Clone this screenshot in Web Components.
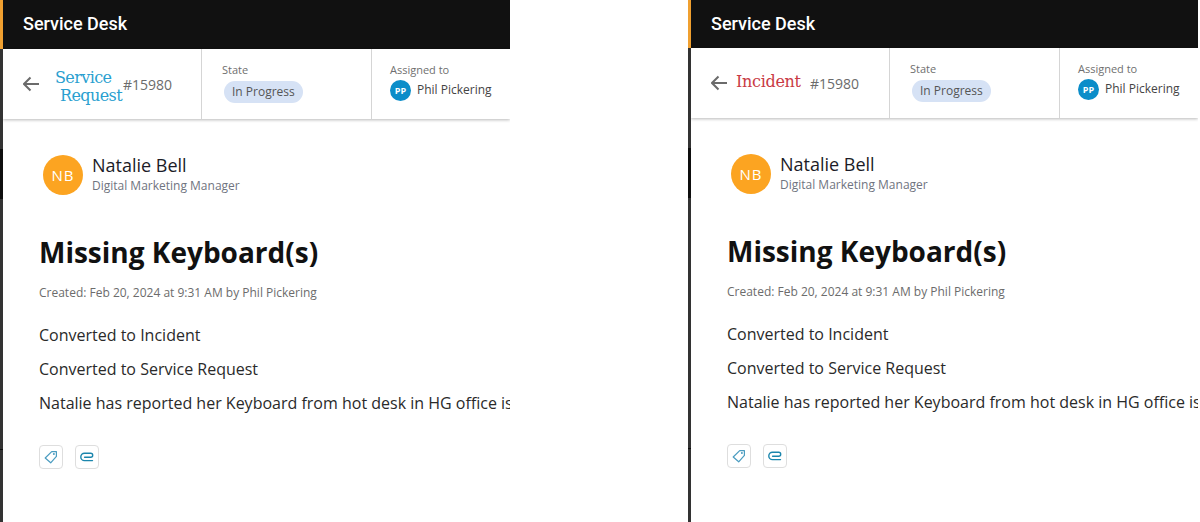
<!DOCTYPE html>
<html>
<head>
<meta charset="utf-8">
<title>Service Desk</title>
<style>
    html, body { margin: 0; height: 100%; background: white; overflow: hidden; }
    body { display: flex; height: 522px; font-family: "Open Sans", sans-serif; }
</style>
</head>
<body>
<ticket-pane offset="0" type="Service|Request" color="#2a9fd0" style="--pane-width: 510px; --after: 178px;"></ticket-pane>
<ticket-pane offset="1" type="Incident" color="#c93a44" style="--pane-width: 510px; --after: 0px;"></ticket-pane>

<script>
class AppBar extends HTMLElement {
    constructor() {
        super();
        this.attachShadow({ mode: 'open' });
        this.shadowRoot.innerHTML = `
            <style>
                :host { display: flex; align-items: center; box-sizing: border-box; background: #111; color: white;
                    padding: 0 0 2px 20px; font: 500 18px Roboto, sans-serif; flex: none; }
            </style>
            <slot></slot>
        `;
    }
}

class TicketField extends HTMLElement {
    constructor() {
        super();
        this.attachShadow({ mode: 'open' });
        this.shadowRoot.innerHTML = `
            <style>
                :host { display: flex; flex-direction: column; flex: none; padding: 13px 0 0 18px;
                    border-left: 1px solid #d5d5d5; font-family: "Open Sans", sans-serif; }
                .label { font-size: 11px; line-height: 15px; color: #6f6f6f; }
            </style>
            <div class="label">${this.getAttribute('label')}</div>
            <slot></slot>
        `;
    }
}

class StatePill extends HTMLElement {
    constructor() {
        super();
        this.attachShadow({ mode: 'open' });
        this.shadowRoot.innerHTML = `
            <style>
                :host { display: inline-block; align-self: flex-start; margin: 4px 0 0 2px; padding: 0 8px; height: 22px; line-height: 21px;
                    border-radius: 11px; background: #d6e2f5; color: #555; font-size: 12px; }
            </style>
            <slot></slot>
        `;
    }
}

class UserChip extends HTMLElement {
    constructor() {
        super();
        this.attachShadow({ mode: 'open' });
        this.shadowRoot.innerHTML = `
            <style>
                :host { display: flex; align-items: center; gap: 6px; color: #444; font-size: 12px; margin-top: 3px; }
                .dot { width: 21px; height: 21px; border-radius: 50%; background: #0b8dc9; color: white;
                    font-size: 9px; font-weight: 700; display: flex; align-items: center; justify-content: center; }
                span { position: relative; top: -1px; }
            </style>
            <div class="dot">${this.getAttribute('initials')}</div>
            <span><slot></slot></span>
        `;
    }
}

class IconButton extends HTMLElement {
    constructor() {
        super();
        this.attachShadow({ mode: 'open' });
        this.shadowRoot.innerHTML = `
            <style>
                :host { display: flex; align-items: center; justify-content: center; width: 22px; height: 22px;
                    border: 1px solid #dedede; border-radius: 4px; background: white; }
            </style>
            <slot></slot>
        `;
    }
}

class TicketPane extends HTMLElement {
    constructor() {
        super();
        this.attachShadow({ mode: 'open' });
        const lines = this.getAttribute('type').split('|');
        const color = this.getAttribute('color');
        const drop = Number(this.getAttribute('offset'));
        const wrapped = lines.length > 1;
        const typeText = wrapped
            ? `<span class="l1">${lines[0]}</span><span class="l2">${lines[1]}</span>`
            : lines[0];
        this.shadowRoot.innerHTML = `
            <style>
                :host { display: flex; flex: none; width: calc(var(--pane-width) + var(--after)); height: 522px;
                    font-family: "Open Sans", sans-serif; color: #222; overflow: hidden; }
                .rail { width: 3px; flex: none; display: flex; flex-direction: column; }
                .rail i { display: block; background: #333; }
                .rail .a { height: ${49 - drop}px; background: #f0a030; }
                .rail .b { height: 100px; }
                .rail .c { height: 50px; background: #0e0e0e; }
                .rail .d { height: 250px; }
                .rail .e { height: 1px; background: #0e0e0e; }
                .rail .f { flex: 1; }
                .main { width: calc(var(--pane-width) - 3px); flex: none; display: flex; flex-direction: column; overflow: hidden; }
                app-bar { height: ${49 - drop}px; }
                .bar { display: flex; flex: none; height: 70px; box-shadow: 0 1px 3px rgba(0,0,0,.28); position: relative; }
                .head { width: 198px; flex: none; display: flex; align-items: center; padding-left: 20px; box-sizing: border-box; }
                .type { font: 16px/18px "DejaVu Serif", "Liberation Serif", serif; color: ${color}; flex: none;
                    margin-left: ${wrapped ? 14 : 7}px; width: ${wrapped ? 68 : 74}px; margin-top: ${wrapped ? 5 : -2}px;
                    letter-spacing: ${wrapped ? -0.6 : -0.3}px; white-space: nowrap; }
                .type span { display: block; }
                .type .l2 { margin-left: 5px; }
                .num { font-size: 14px; color: #6b6b6b; flex: none; }
                .state { width: 170px; box-sizing: border-box; padding-left: 20px; }
                .body { padding: 35px 0 0 36px; white-space: nowrap; }
                .person { display: flex; align-items: center; gap: 9px; margin-left: 4px; }
                .avatar { width: 40px; height: 40px; border-radius: 50%; background: #fca421; color: white; font-size: 15px;
                    letter-spacing: 1px; display: flex; align-items: center; justify-content: center; }
                .name { font-size: 18px; line-height: 23px; color: #1c1c28; }
                .role { font-size: 12px; line-height: 18px; color: #6f7480; }
                h1 { font-size: 28px; line-height: 36px; font-weight: 700; margin: 39px 0 0; color: #111; }
                .created { font-size: 12px; line-height: 18px; color: #6c6c6c; margin-top: 14px; }
                p { font-size: 16px; line-height: 22px; margin: 12px 0 0; color: #2a2a2a; }
                .created + p { margin-top: 22px; }
                .tools { display: flex; gap: 12px; margin-top: 31px; }
                svg { display: block; }
            </style>
            <div class="rail"><i class="a"></i><i class="b"></i><i class="c"></i><i class="d"></i><i class="e"></i><i class="f"></i></div>
            <div class="main">
                <app-bar>Service Desk</app-bar>
                <div class="bar">
                    <div class="head">
                        <svg width="18" height="16" viewBox="0 0 18 16" fill="none" stroke="#6b6b6b" stroke-width="2"><path d="M16 8H1.2M7.5 1.5 1 8l6.5 6.5"/></svg>
                        <div class="type">${typeText}</div>
                        <div class="num">#15980</div>
                    </div>
                    <ticket-field class="state" label="State"><state-pill>In Progress</state-pill></ticket-field>
                    <ticket-field label="Assigned to"><user-chip initials="PP">Phil Pickering</user-chip></ticket-field>
                </div>
                <div class="body">
                    <div class="person">
                        <div class="avatar">NB</div>
                        <div>
                            <div class="name">Natalie Bell</div>
                            <div class="role">Digital Marketing Manager</div>
                        </div>
                    </div>
                    <h1>Missing Keyboard(s)</h1>
                    <div class="created">Created: Feb 20, 2024 at 9:31 AM by Phil Pickering</div>
                    <p>Converted to Incident</p>
                    <p>Converted to Service Request</p>
                    <p>Natalie has reported her Keyboard from hot desk in HG office is missing</p>
                    <div class="tools">
                        <icon-button>
                            <svg width="16" height="16" viewBox="0 0 16 16" fill="none" stroke="#4a9cc0" stroke-width="1.2" stroke-linejoin="round"><path d="M8.7 2.6H13.4V7.4L7.7 13.8 2.2 9z"/><circle cx="10.9" cy="5.1" r="1" fill="#4a9cc0" stroke="none"/></svg>
                        </icon-button>
                        <icon-button>
                            <svg width="16" height="16" viewBox="0 0 16 16" fill="none" stroke="#1b86ad" stroke-width="1.4" stroke-linecap="round"><path d="M13.5 11.6H5.5a3.6 3.6 0 0 1 0-7.4h6.2a2 2 0 0 1 0 4H5.6"/></svg>
                        </icon-button>
                    </div>
                </div>
            </div>
        `;
    }
}

customElements.define('app-bar', AppBar);
customElements.define('ticket-field', TicketField);
customElements.define('state-pill', StatePill);
customElements.define('user-chip', UserChip);
customElements.define('icon-button', IconButton);
customElements.define('ticket-pane', TicketPane);
</script>
</body>
</html>
